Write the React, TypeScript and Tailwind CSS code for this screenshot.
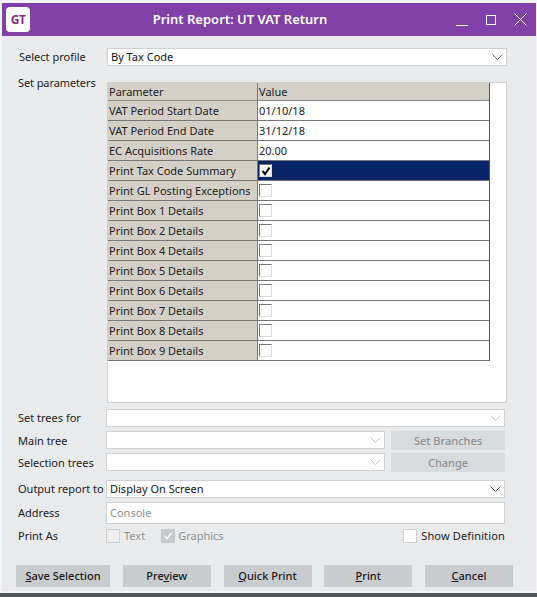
const font = { fontFamily: '"Noto Sans", sans-serif' };

function Chevron({ color = "#6b6b6b" }: { color?: string }) {
  return (
    <svg width="11" height="6" viewBox="0 0 11 6" className="shrink-0">
      <path d="M0.5 0.5 L5.5 5.5 L10.5 0.5" fill="none" stroke={color} strokeWidth="1" />
    </svg>
  );
}

function Combo({ text, width, height = "h-[18px]", color = "#6b6b6b" }: { text?: string; width: string; height?: string; color?: string }) {
  return (
    <div className={`${width} ${height} flex items-center justify-between bg-white border border-[#cfd0d2] pl-[3px] pr-[3px] text-[11px] text-[#111]`}>
      <span>{text}</span>
      <Chevron color={color} />
    </div>
  );
}

function Check({ checked }: { checked?: boolean }) {
  return (
    <div className="w-[13px] h-[13px] bg-white border border-t-[#777] border-l-[#777] border-r-[#ddd] border-b-[#ddd] flex items-center justify-center">
      {checked && (
        <svg width="10" height="10" viewBox="0 0 10 10">
          <path d="M1.5 5 L4 8 L8.5 1.5" fill="none" stroke="#000" strokeWidth="2" />
        </svg>
      )}
    </div>
  );
}

const rows: { label: string; value?: string; check?: boolean; checked?: boolean; selected?: boolean }[] = [
  { label: "VAT Period Start Date", value: "01/10/18" },
  { label: "VAT Period End Date", value: "31/12/18" },
  { label: "EC Acquisitions Rate", value: "20.00" },
  { label: "Print Tax Code Summary", check: true, checked: true, selected: true },
  { label: "Print GL Posting Exceptions", check: true },
  { label: "Print Box 1 Details", check: true },
  { label: "Print Box 2 Details", check: true },
  { label: "Print Box 4 Details", check: true },
  { label: "Print Box 5 Details", check: true },
  { label: "Print Box 6 Details", check: true },
  { label: "Print Box 7 Details", check: true },
  { label: "Print Box 8 Details", check: true },
  { label: "Print Box 9 Details", check: true },
];

function Btn({ width, height = "h-[22px]", children, disabled }: { width: string; height?: string; children: React.ReactNode; disabled?: boolean }) {
  return (
    <div className={`${width} ${height} flex items-center justify-center text-[11px] font-medium ${disabled ? "bg-[#d9dcde] text-[#8e9193]" : "bg-[#c9cccf] text-[#1a1a1a]"}`}>
      {children}
    </div>
  );
}

export default function App() {
  return (
    <div style={font} className="w-[537px] h-[597px] bg-[#f4f4f6] pt-[3px] pl-[2px] pr-[1px] flex flex-col overflow-hidden">
      <div className="h-[33px] bg-[#8040a8] flex items-center pl-[4px] pr-[9px] shrink-0">
        <div className="w-[24px] h-[25px] bg-white rounded-[4px] flex items-center justify-center text-[12px] font-bold text-[#8a2a7e] tracking-[-0.5px]">GT</div>
        <div className="flex-1 text-center text-white text-[13px] font-semibold pr-[6px]">Print Report: UT VAT Return</div>
        <div className="flex items-center gap-[18px]">
          <div className="w-[12px] h-px bg-white mt-[12px]" />
          <div className="w-[10px] h-[10px] border border-white" />
          <svg width="13" height="13" viewBox="0 0 13 13"><path d="M0.5 0.5 L12.5 12.5 M12.5 0.5 L0.5 12.5" stroke="#fff" strokeWidth="1" /></svg>
        </div>
      </div>
      <div className="flex-1 bg-[#e9eaec] flex flex-col text-[11px] text-[#222]">
        <div className="flex items-center h-[18px] mt-[12px]">
          <div className="w-[105px] pl-[17px]">Select profile</div>
          <Combo text="By Tax Code" width="w-[400px]" />
        </div>
        <div className="flex mt-[16px]">
          <div className="w-[105px] pl-[16px] leading-[0px] tracking-[-0.1px] pt-[1px]">Set parameters</div>
          <div className="w-[400px] h-[321px] bg-white border border-[#cfd0d2]">
            <div className="w-[382px] border-r border-[#555]">
              <div className="flex h-[18px] bg-[#d4d0c8] border-b border-[#8a8a8a]">
                <div className="w-[150px] border-r border-[#777] pl-[1px] leading-[18px]">Parameter</div>
                <div className="flex-1 pl-[1px] leading-[18px]">Value</div>
              </div>
              {rows.map((r) => (
                <div key={r.label} className="flex h-[20px] border-b border-[#777]">
                  <div className="w-[150px] bg-[#d4d0c8] border-r border-[#777] pl-[1px] leading-[19px] whitespace-nowrap">{r.label}</div>
                  <div className={`flex-1 pl-[1px] flex items-center ${r.selected ? "bg-[#0a246a]" : "bg-white"}`}>
                    {r.check ? <Check checked={r.checked} /> : <span className="pt-[1px]">{r.value}</span>}
                  </div>
                </div>
              ))}
            </div>
          </div>
        </div>
        <div className="flex items-center h-[18px] mt-[6px]">
          <div className="w-[104px] pl-[16px]">Set trees for</div>
          <Combo width="w-[399px]" color="#c0c2c4" />
        </div>
        <div className="flex items-start h-[18px] mt-[4px]">
          <div className="w-[104px] pl-[16px] leading-[20px]">Main tree</div>
          <Combo width="w-[279px]" color="#c0c2c4" />
          <div className="ml-[6px]"><Btn width="w-[114px]" height="h-[19px] pt-[2px]" disabled>Set Branches</Btn></div>
        </div>
        <div className="flex items-start h-[18px] mt-[4px]">
          <div className="w-[104px] pl-[16px] leading-[20px]">Selection trees</div>
          <Combo width="w-[279px]" color="#c0c2c4" />
          <div className="ml-[6px]"><Btn width="w-[114px]" height="h-[19px] pt-[2px]" disabled>Change</Btn></div>
        </div>
        <div className="flex items-center h-[18px] mt-[9px]">
          <div className="w-[104px] pl-[16px] pt-[1px] whitespace-nowrap">Output report to</div>
          <Combo text="Display On Screen" width="w-[399px]" color="#555" />
        </div>
        <div className="flex items-center h-[22px] mt-[4px]">
          <div className="w-[104px] pl-[16px] pt-[1px]">Address</div>
          <div className="w-[399px] h-[22px] bg-white border border-[#cfd0d2] pl-[3px] flex items-center text-[#8e8e8e]">Console</div>
        </div>
        <div className="flex items-center h-[14px] mt-[5px]">
          <div className="w-[104px] pl-[16px]">Print As</div>
          <div className="w-[14px] h-[14px] bg-[#eeeeee] border border-[#cfd0d2]" />
          <span className="ml-[4px] text-[#8e9193]">Text</span>
          <div className="w-[14px] h-[14px] bg-[#c8cacc] ml-[16px] flex items-center justify-center">
            <svg width="10" height="10" viewBox="0 0 10 10"><path d="M1.5 5 L4 7.5 L8.5 2" fill="none" stroke="#fff" strokeWidth="1.2" /></svg>
          </div>
          <span className="ml-[3px] text-[#8e9193]">Graphics</span>
          <div className="ml-auto mr-[31px] flex items-center">
            <div className="w-[14px] h-[14px] bg-white border border-[#cfd0d2]" />
            <span className="ml-[4px] tracking-[0.15px]">Show Definition</span>
          </div>
        </div>
        <div className="flex mt-[22px] pl-[14px] gap-[12.75px]">
          <Btn width="w-[94px]"><span><u>S</u>ave Selection</span></Btn>
          <Btn width="w-[88px]"><span>Pre<u>v</u>iew</span></Btn>
          <Btn width="w-[88px]"><span><u>Q</u>uick Print</span></Btn>
          <Btn width="w-[88px]"><span><u>P</u>rint</span></Btn>
          <Btn width="w-[88px]"><span><u>C</u>ancel</span></Btn>
        </div>
      </div>
      <div className="h-[2px] shrink-0" />
      <div className="h-[4px] bg-[#50565c] -ml-[2px] -mr-[1px] shrink-0" />
    </div>
  );
}
